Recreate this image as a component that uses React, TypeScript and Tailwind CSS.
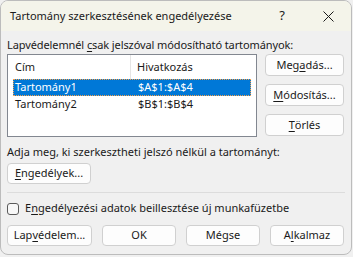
const fontFamily = '"Segoe UI", "Noto Sans", sans-serif';

function U({ children }: { children: string }) {
  return <span className="underline underline-offset-[1.5px]">{children}</span>;
}

function Btn({ children, className = "" }: { children: React.ReactNode; className?: string }) {
  return (
    <button
      className={`shrink-0 rounded-[4px] border border-[#d0d0d0] bg-[#fdfdfd] text-[11px] text-[#1a1a1a] flex items-center justify-center ${className}`}
    >
      {children}
    </button>
  );
}

export default function App() {
  return (
    <div className="w-[353px] h-[257px] bg-[#f0f0f0]" style={{ fontFamily }}>
      <div className="w-[352px] h-[255px] rounded-[8px] border border-[#bcbcbc] bg-[#f0f0f0] overflow-hidden flex flex-col">
        <div className="h-[30px] shrink-0 bg-[#f4f4ea] flex items-center pl-[9px] text-[11px] text-[#1a1a1a]">
          <span className="flex-1">Tartomány szerkesztésének engedélyezése</span>
          <span className="shrink-0 w-[46px] text-center text-[13px]">?</span>
          <span className="shrink-0 w-[46px] flex justify-center">
            <svg width="11" height="11" viewBox="0 0 11 11">
              <path d="M0.5 0.5L10.5 10.5M10.5 0.5L0.5 10.5" stroke="#1a1a1a" strokeWidth="1" />
            </svg>
          </span>
        </div>

        <div className="px-[6px] pt-[6px] text-[11px] text-[#1a1a1a] flex flex-col">
          <div className="leading-[16px] h-[17px] tracking-[-0.1px]">
            Lapvédelemnél <U>c</U>sak jelszóval módosítható tartományok:
          </div>
          <div className="flex gap-[8px]">
            <div className="w-[250px] h-[83px] border border-[#828790] bg-white px-[5px]">
              <div className="flex h-[24px] items-center">
                <span className="w-[117px] pl-[2px]">Cím</span>
                <span className="w-px h-full bg-[#e5e5e5]" />
                <span className="pl-[6px]">Hivatkozás</span>
              </div>
              <div className="flex h-[17px] items-center bg-[#0078d7] text-white border border-dotted border-[#f5a04a]">
                <span className="w-[118px] pl-[1px]">Tartomány1</span>
                <span className="pl-[6px]">$A$1:$A$4</span>
              </div>
              <div className="flex h-[17px] items-center">
                <span className="w-[118px] pl-[2px]">Tartomány2</span>
                <span className="pl-[7px]">$B$1:$B$4</span>
              </div>
            </div>
            <div className="flex flex-col gap-[8px]">
              <Btn className="w-[79px] h-[22px]">
                Meg<U>a</U>dás...
              </Btn>
              <Btn className="w-[79px] h-[22px]">
                <U>M</U>ódosítás...
              </Btn>
              <Btn className="w-[79px] h-[22px]">
                <U>T</U>örlés
              </Btn>
            </div>
          </div>

          <div className="mt-[7px] leading-[16px]">Adja meg, ki szerkesztheti jelszó nélkül a tartományt:</div>
          <Btn className="w-[84px] mt-[3px] h-[21px]">
            <U>E</U>ngedélyek...
          </Btn>
          <div className="mt-[8px] h-px bg-[#dcdcdc] w-[338px]" />

          <label className="mt-[9px] flex items-center gap-[6px] h-[13px]">
            <span className="shrink-0 w-[12px] h-[12px] rounded-[3px] border border-[#5a5a5a] bg-[#f8f8f8]" />
            <span>
              E<U>n</U>gedélyezési adatok beillesztése új munkafüzetbe
            </span>
          </label>

          <div className="mt-[10px] flex gap-[10px]">
            <Btn className="w-[85px] h-[21px]">
              Lap<U>v</U>édelem...
            </Btn>
            <Btn className="w-[74px] h-[21px]">OK</Btn>
            <Btn className="w-[74px] h-[21px]">Mégse</Btn>
            <Btn className="w-[74px] h-[21px]">
              A<U>l</U>kalmaz
            </Btn>
          </div>
        </div>
      </div>
    </div>
  );
}
